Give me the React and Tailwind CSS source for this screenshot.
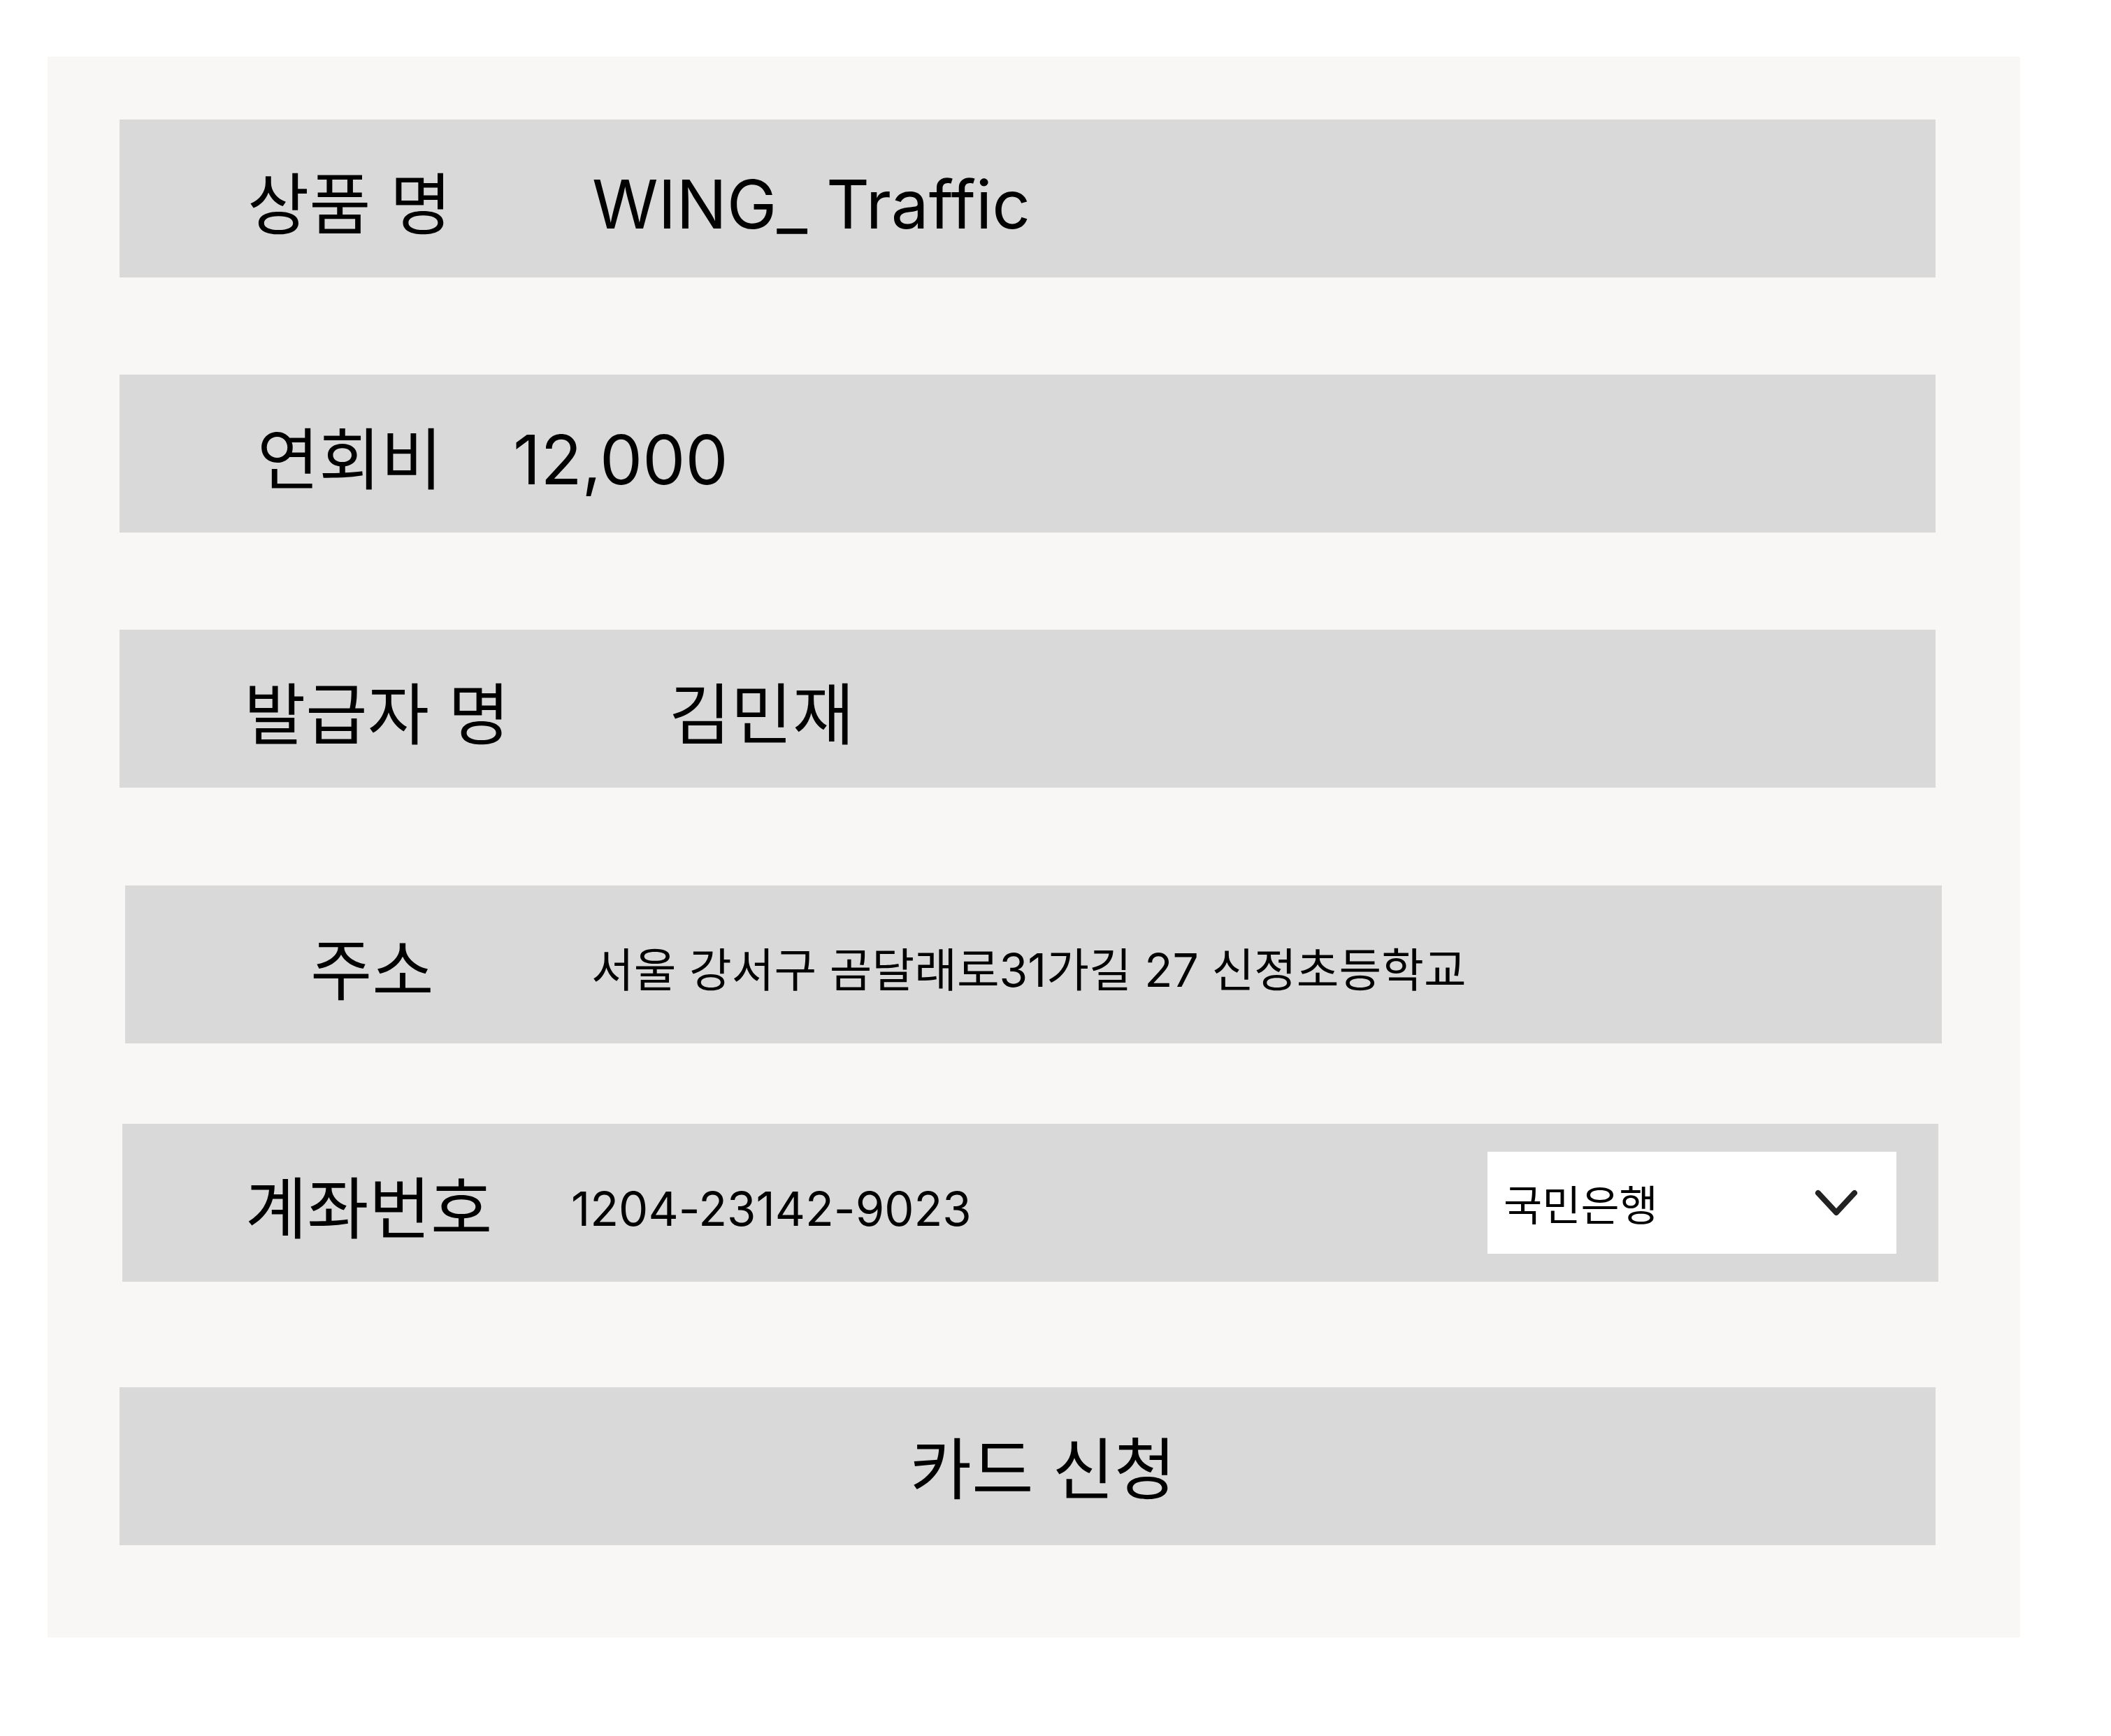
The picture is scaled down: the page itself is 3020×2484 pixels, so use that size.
const FONT = "font-['Inter','Noto_Sans_CJK_KR',sans-serif] [font-variant-ligatures:none]";

function Row({ className = '', children }) {
  return <div className={`flex items-center h-[226px] bg-[#d9d9d9] pt-[16px] ${className}`}>{children}</div>;
}

export default function App() {
  return (
    <div className={`min-h-screen bg-white pt-[81px] pl-[68px] text-black ${FONT}`}>
      <div className="flex flex-col w-[2822px] h-[2262px] bg-[#f8f7f5] pt-[90px]">
        <Row className="ml-[103px] w-[2598px] pl-[183px]">
          <span className="w-[493px] shrink-0 text-[96px] leading-none">상품 명</span>
          <span className="text-[96px] leading-none">WING_ Traffic</span>
        </Row>

        <Row className="ml-[103px] w-[2598px] mt-[139px] pl-[197px]">
          <span className="w-[366px] shrink-0 text-[96px] leading-none">연회비</span>
          <span className="text-[97px] leading-none">12,000</span>
        </Row>

        <Row className="ml-[103px] w-[2598px] mt-[139px] pl-[178px]">
          <span className="w-[608px] shrink-0 text-[96px] leading-none">발급자 명</span>
          <span className="text-[96px] leading-none">김민재</span>
        </Row>

        <Row className="ml-[111px] w-[2599px] mt-[140px] pl-[265px]">
          <span className="w-[402px] shrink-0 text-[96px] leading-none">주소</span>
          <span className="text-[66px] leading-none">서울 강서구 곰달래로31가길 27 신정초등학교</span>
        </Row>

        <Row className="ml-[107px] w-[2598px] mt-[115px] pl-[176px] pr-[60px]">
          <span className="w-[466px] shrink-0 text-[96px] leading-none">계좌번호</span>
          <span className="text-[67px] leading-none">1204-23142-9023</span>
          <div className="ml-auto -mt-[16px] flex items-center justify-between w-[585px] h-[146px] bg-white pl-[23px] pr-[55px]">
            <span className="text-[60px] leading-none pt-[8px]">국민은행</span>
            <svg width="62" height="38" viewBox="0 0 62 38" fill="none">
              <path
                d="M5 5 L31 33 L57 5"
                stroke="#222222"
                strokeWidth="8"
                strokeLinecap="round"
                strokeLinejoin="round"
              />
            </svg>
          </div>
        </Row>

        <button
          type="button"
          className="flex items-center justify-center ml-[103px] w-[2598px] h-[226px] mt-[151px] bg-[#d9d9d9] pl-[44px] pt-[8px]"
        >
          <span className="text-[96px] leading-none">카드 신청</span>
        </button>
      </div>
    </div>
  );
}
